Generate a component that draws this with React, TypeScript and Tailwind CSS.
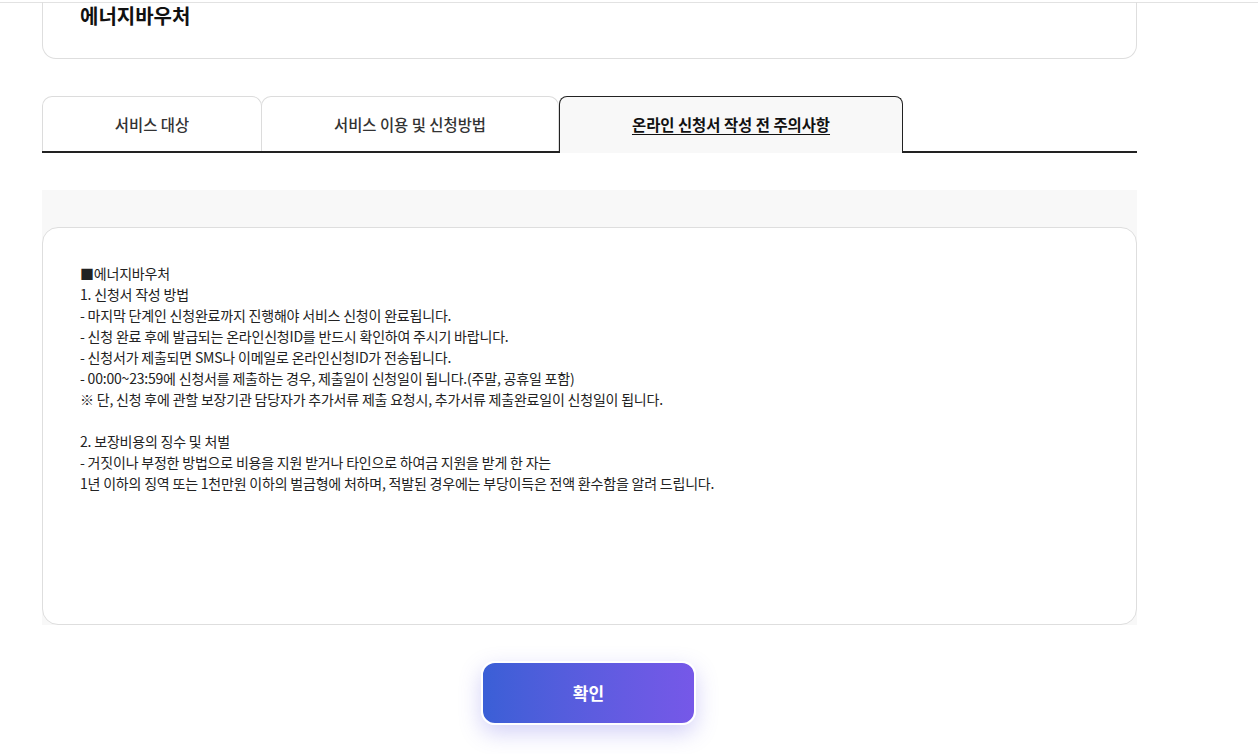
import React from "react";

const tabs = [
  { label: "서비스 대상", w: "w-[220px]" },
  { label: "서비스 이용 및 신청방법", w: "w-[298px]" },
];

const lines = [
  "■에너지바우처",
  "1. 신청서 작성 방법",
  "- 마지막 단계인 신청완료까지 진행해야 서비스 신청이 완료됩니다.",
  "- 신청 완료 후에 발급되는 온라인신청ID를 반드시 확인하여 주시기 바랍니다.",
  "- 신청서가 제출되면 SMS나 이메일로 온라인신청ID가 전송됩니다.",
  "- 00:00~23:59에 신청서를 제출하는 경우, 제출일이 신청일이 됩니다.(주말, 공휴일 포함)",
  "※ 단, 신청 후에 관할 보장기관 담당자가 추가서류 제출 요청시, 추가서류 제출완료일이 신청일이 됩니다.",
  "",
  "2. 보장비용의 징수 및 처벌",
  "- 거짓이나 부정한 방법으로 비용을 지원 받거나 타인으로 하여금 지원을 받게 한 자는",
  "1년 이하의 징역 또는 1천만원 이하의 벌금형에 처하며, 적발된 경우에는 부당이득은 전액 환수함을 알려 드립니다.",
];

export default function App() {
  return (
    <div
      className="min-h-[754px] bg-white text-[#222]"
      style={{ fontFamily: '"Noto Sans CJK KR", "Noto Sans", sans-serif' }}
    >
      <div className="h-[3px] border-b border-[#e2e2e2]" />
      <div className="ml-[42px] w-[1095px]">
        {/* title card */}
        <div className="h-[57px] rounded-b-[14px] border border-t-0 border-[#dedede] pl-[37px]">
          <h1 className="text-[20px] font-bold leading-[28px] text-[#111] -mt-[1px]">에너지바우처</h1>
        </div>

        {/* tabs */}
        <div className="mt-[37px] flex h-[57px]">
          {tabs.map((t, i) => (
            <div
              key={t.label}
              className={`${t.w} ${i > 0 ? "-ml-px" : ""} flex items-center justify-center rounded-t-[10px] border border-b-0 border-[#dcdcdc] relative`}
            >
              <span className="text-[15.4px] font-medium text-[#333]">{t.label}</span>
              <div className="absolute -left-px -right-px bottom-0 h-[2px] bg-[#222]" />
            </div>
          ))}
          <div className="w-[344px] flex items-center justify-center rounded-t-[8px] border border-b-0 border-[#222] bg-[#f8f8f8]">
            <span className="text-[15.4px] font-bold text-[#111] underline underline-offset-[3px]">
              온라인 신청서 작성 전 주의사항
            </span>
          </div>
          <div className="flex-1 flex flex-col justify-end">
            <div className="h-[2px] bg-[#222]" />
          </div>
        </div>

        {/* content */}
        <div className="mt-[37px] bg-[#f8f8f8] pt-[37px]">
          <div className="h-[398px] rounded-[16px] border border-[#dedede] bg-white pl-[37px] pt-[35px]">
            <div className="text-[14px] leading-[21px] text-[#222]">
              {lines.map((l, i) => (
                <div key={i} className="h-[21px] tracking-[-0.2px]">
                  {l}
                </div>
              ))}
            </div>
          </div>
        </div>

        {/* button */}
        <div className="mt-[36px] flex justify-center">
          <button className="h-[64px] w-[215px] -ml-[2px] rounded-[14px] border-2 border-white bg-gradient-to-r from-[#3a5fd6] to-[#7658e8] text-[17px] font-bold text-white shadow-[0_8px_22px_rgba(98,88,225,0.28)]">
            확인
          </button>
        </div>
      </div>
    </div>
  );
}
